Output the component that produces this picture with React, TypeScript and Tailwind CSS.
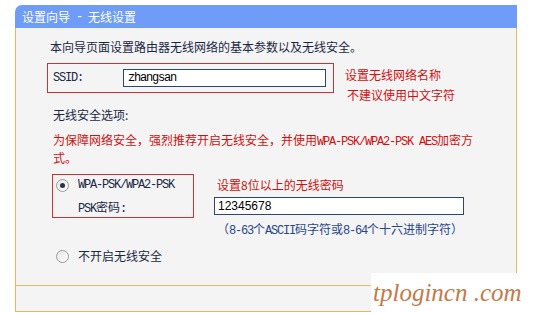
import React from 'react';

const cjk = "font-['SimSun','Noto_Sans_CJK_SC',sans-serif]";
const mono = "font-['Liberation_Mono','Noto_Sans_CJK_SC',monospace] text-[12px] tracking-[-1.2px]";

const Radio = ({ checked }: { checked?: boolean }) => (
  <span className="flex h-[13px] w-[13px] shrink-0 items-center justify-center rounded-full border border-[#9a9a9a] bg-gradient-to-br from-[#e6e6e6] to-[#ffffff]">
    {checked && <span className="h-[5px] w-[5px] rounded-full bg-[#2a3140]" />}
  </span>
);

const App = () => {
  return (
    <div className={`relative h-[313px] w-[546px] overflow-hidden bg-white text-[12px] text-[#1b2845] ${cjk}`}>
      <div className="ml-[15px] mt-[5px] w-[502px]">
        {/* title bar */}
        <div className="flex h-[23px] items-center rounded-tl-[7px] bg-[#6e9cf6] pl-[7px] text-white">
          设置向导<span className={`${mono} whitespace-pre`}> - </span>无线设置
        </div>

        {/* body */}
        <div className="h-[257px] border-x border-[#ebb65e] bg-[#f4f4f4] pl-[34px] pt-[10px] leading-[18px]">
          <div className="h-[18px]">本向导页面设置路由器无线网络的基本参数以及无线安全。</div>

          <div className="mt-[7px] flex">
            <div className="ml-[-3px] flex h-[30px] w-[287px] items-center border border-[#c8323a] pl-[5px]">
              <span className={`w-[70px] ${mono}`}>SSID:</span>
              <div className="flex h-[18px] w-[203px] items-center border border-[#2c4673] bg-white pl-[4px]">
                <span className={`${mono} text-black`}>zhangsan</span>
              </div>
            </div>
            <div className="ml-[11px] flex flex-col gap-[2px] pt-[3px] text-[#d01010]">
              <span>设置无线网络名称</span>
              <span className="ml-[2px]">不建议使用中文字符</span>
            </div>
          </div>

          <div className="ml-[3px] mt-[2px]">无线安全选项:</div>

          <div className="ml-[3px] mt-[7px] text-[#d01010]">
            <div className="h-[18px] whitespace-nowrap">
              为保障网络安全，强烈推荐开启无线安全，并使用<span className={`${mono} whitespace-pre`}>WPA-PSK/WPA2-PSK AES</span>加密方
            </div>
            <div className="h-[18px]">式。</div>
          </div>

          <div className="mt-[7px] flex">
            <div className="ml-[2px] h-[44px] w-[142px] border border-[#c8323a]">
              <div className="mt-[1px] flex h-[18px] items-center pl-[3px]">
                <Radio checked />
                <span className={`ml-[9px] ${mono}`}>WPA-PSK/WPA2-PSK</span>
              </div>
              <div className="mt-[4px] h-[18px] pl-[25px]">
                <span className={mono}>PSK</span>密码<span className={mono}>:</span>
              </div>
            </div>
            <div className="ml-[20px] flex flex-col">
              <span className="ml-[3px] mt-[2px] text-[#d01010]">设置8位以上的无线密码</span>
              <div className="mt-[3px] flex h-[18px] w-[250px] items-center border border-[#2c4673] bg-white pl-[3px] font-['Liberation_Sans',sans-serif] text-[12px] text-black">
                12345678
              </div>
              <span className="ml-[3px] mt-[5px] text-[#28468a]">
                （<span className={mono}>8-63</span>个<span className={mono}>ASCII</span>码字符或<span className={mono}>8-64</span>个十六进制字符）
              </span>
            </div>
          </div>

          <div className="ml-[6px] mt-[7px] flex h-[18px] items-center">
            <Radio />
            <span className="ml-[9px]">不开启无线安全</span>
          </div>
        </div>

        {/* footer */}
        <div className="h-[27px] border border-[#ebb65e] bg-[#f4f4f4]" />
      </div>

      {/* watermark */}
      <div className="absolute left-[371px] top-[273px] flex h-[40px] w-[175px] items-center bg-white pl-[2px] font-['Liberation_Serif',serif] text-[25px] italic text-[#c47a48]">
        tplogincn .com
      </div>
    </div>
  );
};

export default App;
